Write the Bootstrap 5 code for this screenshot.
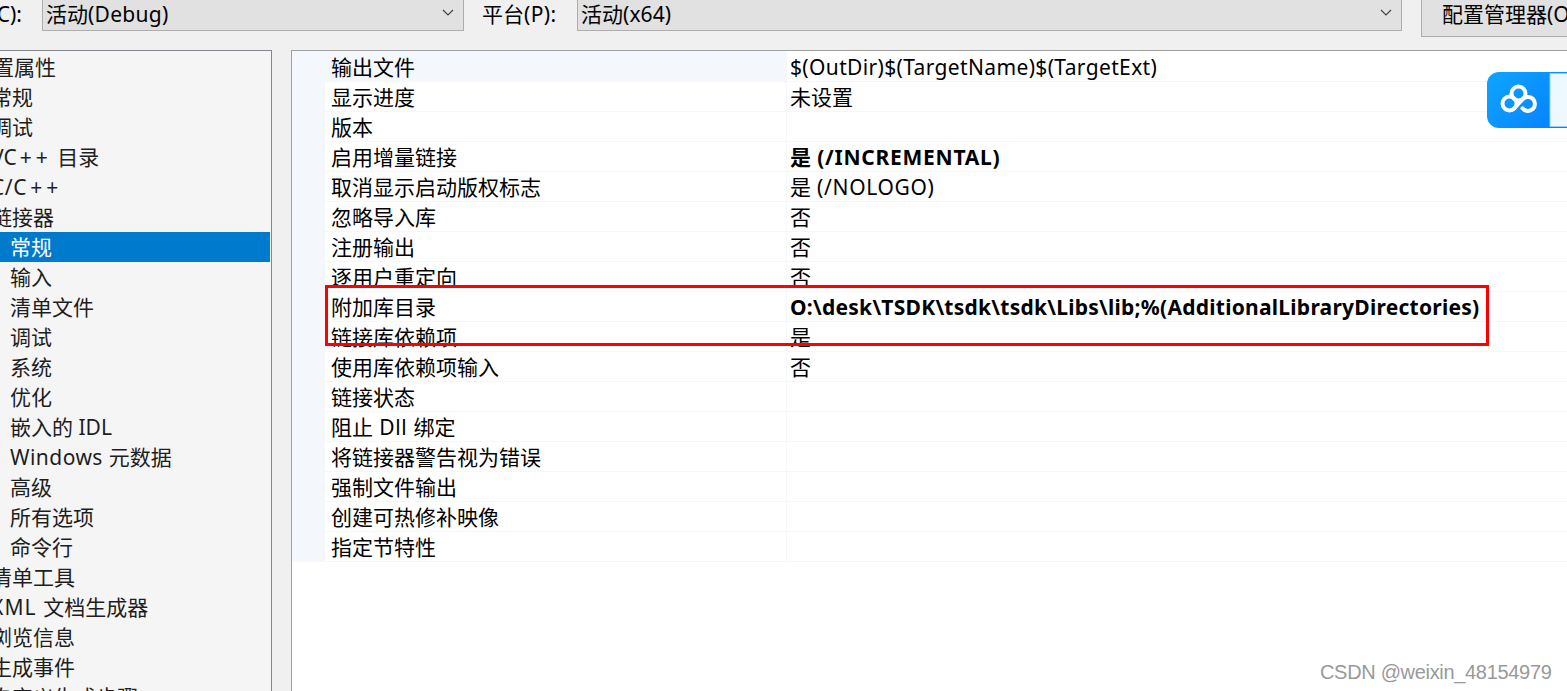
<!DOCTYPE html>
<html lang="zh-CN">
<head>
  <meta charset="UTF-8">
  <title>属性页</title>
  <link href="https://cdn.jsdelivr.net/npm/bootstrap@5.3.2/dist/css/bootstrap.min.css" rel="stylesheet">
  <style>
    body {
      background: #f0f0f0;
      color: #000;
      font-family: "Noto Sans", "Noto Sans CJK SC", sans-serif;
      font-size: 21px;
      line-height: 30px;
    }
    .toolbar { height: 50px; }
    .toolbar-label { width: 42px; line-height: 28px; padding-right: 20px; }
    .toolbar-label.platform { width: 113px; padding: 0 0 0 18px; }
    .combo {
      height: 31px;
      line-height: 28px;
      background: #e1e1e1;
      border: 1px solid #adadad;
      border-top: 0;
      padding: 0 9px 3px 3px;
    }
    .combo svg { margin-top: -2px; }
    .combo-config { width: 422px; }
    .combo-platform { width: 825px; }
    .manager-btn {
      width: 220px;
      height: 37px;
      line-height: 28px;
      margin-left: 19px;
      padding-left: 20px;
      background: #e1e1e1;
      border: 1px solid #adadad;
      border-top: 0;
    }
    .tree {
      width: 272px;
      background: #f5f5f5;
      border: solid #828790;
      border-width: 1px 1px 0 0;
      color: #1e1e1e;
      padding: 1px 1px 0 0;
    }
    .tree-item { height: 30px; }
    .tree-item > span { display: inline-block; }
    .level-0 > span { margin-left: -28px; }
    .level-1 > span { margin-left: -9px; }
    .level-2 > span { margin-left: 10px; }
    .selected { background: #007acc; color: #fff; }
    .plus { margin-left: 3px; letter-spacing: 4px; }
    .grid {
      margin-left: 19px;
      background: #fff;
      border: solid #a0a0a0;
      border-width: 1px 0 0 1px;
    }
    .grid-rows { background: #f4f7fc; padding: 1px 0 0 33px; }
    .grid-row { height: 30px; background: #fff; }
    .prop-name, .prop-value { height: 30px; border-bottom: 1px solid #f5f7fa; }
    .prop-name { width: 462px; padding-left: 6px; border-right: 1px solid #f4f7fc; }
    .prop-value { padding-left: 3px; }
    .current .prop-name { background: #f4f7fc; }
    .current { box-shadow: 461px -1px 0 #fff; }
    .highlight {
      left: 325px;
      top: 285px;
      width: 1164px;
      height: 61px;
      border: 3px solid #f00;
    }
    .cloud-widget { left: 1487px; top: 72px; }
    .watermark {
      left: 1320px;
      top: 657px;
      font-family: "Liberation Sans", sans-serif;
      font-size: 20px;
      letter-spacing: -.32px;
      color: #999;
    }
  </style>
</head>
<body class="vh-100 overflow-hidden position-relative text-nowrap">

<div class="d-flex flex-column h-100">
  <!-- Configuration bar -->
  <div class="toolbar d-flex align-items-start flex-shrink-0">
    <div class="toolbar-label d-flex justify-content-end flex-shrink-0"><span>配置(C):</span></div>
    <div class="combo combo-config d-flex align-items-center justify-content-between flex-shrink-0">
      <span data-spacing=".3">活动(Debug)</span>
      <svg width="12" height="7" viewBox="0 0 12 7" fill="none" stroke="#444" stroke-width="1.2"><path d="M1 1l5 5 5-5"/></svg>
    </div>
    <div class="toolbar-label platform flex-shrink-0"><span data-spacing=".4">平台(P):</span></div>
    <div class="combo combo-platform d-flex align-items-center justify-content-between flex-shrink-0">
      <span data-spacing=".1">活动(x64)</span>
      <svg width="12" height="7" viewBox="0 0 12 7" fill="none" stroke="#444" stroke-width="1.2"><path d="M1 1l5 5 5-5"/></svg>
    </div>
    <div class="manager-btn flex-shrink-0"><span>配置管理器(O)...</span></div>
  </div>

  <div class="d-flex flex-grow-1 overflow-hidden">
    <!-- Property tree -->
    <div class="tree flex-shrink-0 overflow-hidden" id="tree"></div>

    <!-- Property grid -->
    <div class="grid flex-grow-1 overflow-hidden">
      <div class="grid-rows" id="gridRows"></div>
    </div>
  </div>
</div>

<div class="highlight position-absolute"></div>

<svg class="cloud-widget position-absolute" width="80" height="56" viewBox="0 0 80 56">
  <defs>
    <linearGradient id="cloudBlue" x1="0" y1="0" x2="62" y2="56" gradientUnits="userSpaceOnUse">
      <stop offset="0" stop-color="#0ea5ff"/>
      <stop offset="1" stop-color="#0684ff"/>
    </linearGradient>
  </defs>
  <path d="M12 0H80V56H12A12 12 0 0 1 0 44V12A12 12 0 0 1 12 0Z" fill="url(#cloudBlue)"/>
  <path d="M63 1.5H82V54.5H63Z" fill="#eef8ff" stroke="#8fd0ff"/>
  <g fill="none" stroke="#fff" stroke-width="4">
    <circle cx="31.500" cy="21.500" r="7"/>
    <circle cx="22.500" cy="31.500" r="7"/>
    <path d="M27 36.500L35.500 27.500A7 7 0 1 1 35.500 36.300" stroke-linecap="round"/>
  </g>
</svg>

<div class="watermark position-absolute">CSDN @weixin_48154979</div>

<script src="https://cdn.jsdelivr.net/npm/bootstrap@5.3.2/dist/js/bootstrap.bundle.min.js"></script>
<script>
const tree = [
  [0, '配置属性'], [1, '常规'], [1, '调试'], [1, 'VC++ 目录'], [1, 'C/C++', .6], [1, '链接器'],
  [2, '常规', 0, true], [2, '输入'], [2, '清单文件'], [2, '调试'], [2, '系统'], [2, '优化'],
  [2, '嵌入的 IDL'], [2, 'Windows 元数据', .45], [2, '高级'], [2, '所有选项'], [2, '命令行'],
  [1, '清单工具'], [1, 'XML 文档生成器', 1.1], [1, '浏览信息'], [1, '生成事件'], [1, '自定义生成步骤']
];

const props = [
  ['输出文件', '$(OutDir)$(TargetName)$(TargetExt)', .36],
  ['显示进度', '未设置'],
  ['版本', ''],
  ['启用增量链接', '是 (/INCREMENTAL)', .75, true],
  ['取消显示启动版权标志', '是 (/NOLOGO)', .65],
  ['忽略导入库', '否'],
  ['注册输出', '否'],
  ['逐用户重定向', '否'],
  ['附加库目录', 'O:\\desk\\TSDK\\tsdk\\tsdk\\Libs\\lib;%(AdditionalLibraryDirectories)', .255, true],
  ['链接库依赖项', '是'],
  ['使用库依赖项输入', '否'],
  ['链接状态', ''],
  ['阻止 Dll 绑定', ''],
  ['将链接器警告视为错误', ''],
  ['强制文件输出', ''],
  ['创建可热修补映像', ''],
  ['指定节特性', '']
];

// letter-spacing goes on the Latin runs only
function spaced(text, spacing) {
  return text.replace(/[ -~]+/g, run =>
    `<span style="letter-spacing: ${spacing || 0}px">${run.replace('++', '<span class="plus">++</span>')}</span>`);
}

document.querySelectorAll('[data-spacing]').forEach(el => {
  el.innerHTML = spaced(el.textContent, el.dataset.spacing);
});

document.getElementById('tree').innerHTML = tree.map(([level, text, spacing, selected]) =>
  `<div class="tree-item level-${level} ${selected ? 'selected' : ''}"><span>${spaced(text, spacing)}</span></div>`).join('');

document.getElementById('gridRows').innerHTML = props.map(([name, value, spacing, bold], i) => `
  <div class="grid-row d-flex ${i === 0 ? 'current' : ''}">
    <div class="prop-name flex-shrink-0">${spaced(name, .7)}</div>
    <div class="prop-value flex-grow-1 ${bold ? 'fw-bold' : ''}">${spaced(value, spacing)}</div>
  </div>`).join('');
</script>

</body>
</html>
